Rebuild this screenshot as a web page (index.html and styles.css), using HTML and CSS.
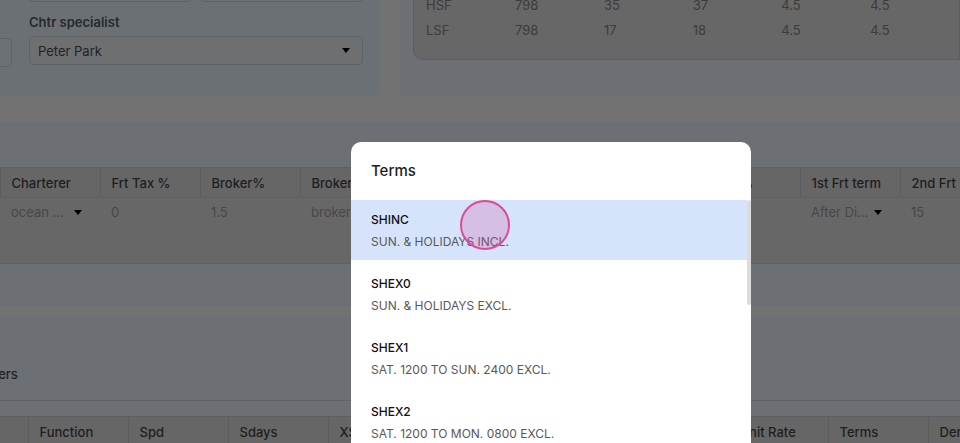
FILE: index.html
```html
<!DOCTYPE html>
<html>
<head>
  <title>Voyage Estimate - Terms</title>
  <link rel="stylesheet" href="styles.css">
</head>
<body>
  <div class="page">
    <div class="top">
      <div class="left-panel">
        <div class="stub"></div>
        <div class="fields">
          <div class="field-row">
            <div class="input"></div>
            <div class="input"></div>
          </div>
          <div class="field-label">Chtr specialist</div>
          <div class="select">
            <span>Peter Park</span>
            <span class="caret"></span>
          </div>
        </div>
      </div>
      <div class="right-panel">
        <div class="fuel-card">
          <table class="fuel-table">
            <tr><td>HSF</td><td>798</td><td>35</td><td>37</td><td>4.5</td><td>4.5</td></tr>
            <tr><td>LSF</td><td>798</td><td>17</td><td>18</td><td>4.5</td><td>4.5</td></tr>
          </table>
        </div>
      </div>
    </div>

    <div class="section freight">
      <div class="grid-wrap">
        <table class="grid grid-freight">
          <thead>
            <tr>
              <th>Cargo</th><th>Charterer</th><th>Frt Tax %</th><th>Broker%</th><th>Broker</th>
              <th>Frt Type</th><th>Frt Rate</th><th>Frt Unit</th><th>Add %</th><th>1st Frt term</th><th>2nd Frt %</th>
            </tr>
          </thead>
          <tbody>
            <tr>
              <td>Coal</td>
              <td><div class="cell-select"><span>ocean ...</span><span class="caret"></span></div></td>
              <td>0</td><td>1.5</td><td>broker</td><td>Lumpsum</td><td>12.5</td><td>PMT</td><td>3.75</td>
              <td><div class="cell-select"><span>After Di...</span><span class="caret"></span></div></td>
              <td>15</td>
            </tr>
          </tbody>
        </table>
      </div>
    </div>

    <div class="section itinerary">
      <div class="section-title">Bunkers</div>
      <div class="rule"></div>
      <table class="grid grid-shift">
        <thead>
          <tr>
            <th>Port</th><th>Function</th><th>Spd</th><th>Sdays</th><th>XSdays</th>
            <th>Load Rate</th><th>Cargo</th><th>Days</th><th>Unit Rate</th><th>Terms</th><th>Dem</th>
          </tr>
        </thead>
      </table>
    </div>
  </div>

  <div class="modal">
    <div class="modal-title">Terms</div>
    <div class="modal-body">
      <div class="term-list">
        <div class="term active">
          <div class="term-code">SHINC</div>
          <div class="term-desc">SUN. &amp; HOLIDAYS INCL.</div>
        </div>
        <div class="term">
          <div class="term-code">SHEX0</div>
          <div class="term-desc">SUN. &amp; HOLIDAYS EXCL.</div>
        </div>
        <div class="term">
          <div class="term-code">SHEX1</div>
          <div class="term-desc">SAT. 1200 TO SUN. 2400 EXCL.</div>
        </div>
        <div class="term">
          <div class="term-code">SHEX2</div>
          <div class="term-desc">SAT. 1200 TO MON. 0800 EXCL.</div>
        </div>
      </div>
      <div class="scroll-track">
        <div class="scroll-thumb"></div>
      </div>
    </div>
  </div>
  <div class="touch"></div>
</body>
</html>
```

FILE: styles.css
```css
/* everything behind the dialog uses the scrim-darkened colours */
html {
  background-color: #737272;
}
body {
  margin: 0;
  padding: 0;
  font-family: Inter, "Noto Sans", sans-serif;
  overflow: hidden;
  height: 443px;
  position: relative;
}

.page {
  width: 960px;
  height: 443px;
  overflow: hidden;
  background-color: #737272;
}

/* top area */
.top {
  display: flex;
  height: 96px;
}
.left-panel {
  width: 380px;
  flex-shrink: 0;
  display: flex;
  background-color: #6b7075;
  border-bottom-right-radius: 6px;
}
.stub {
  width: 40px;
  height: 29px;
  margin-left: -28px;
  margin-top: 38px;
  margin-right: 17px;
  box-sizing: border-box;
  border: 1px solid #5f6367;
  border-radius: 4px;
  background-color: #6e7174;
}
.fields {
  width: 334px;
}
.field-row {
  display: flex;
  gap: 10px;
  margin-top: -27px;
}
.input {
  width: 162px;
  height: 29px;
  box-sizing: border-box;
  border: 1px solid #5f6367;
  border-radius: 4px;
  background-color: #6e7174;
}
.field-label {
  margin-top: 12px;
  font-size: 13px;
  line-height: 16px;
  font-weight: 600;
  color: #27292b;
}
.select {
  margin-top: 6px;
  height: 29px;
  box-sizing: border-box;
  border: 1px solid #606366;
  border-radius: 4px;
  background-color: #6d6f71;
  display: flex;
  align-items: center;
  justify-content: space-between;
  padding: 0 12px 0 8px;
  font-size: 13px;
  color: #232323;
}
.caret {
  width: 0;
  height: 0;
  border-left: 4px solid transparent;
  border-right: 4px solid transparent;
  border-top: 5px solid #000;
}

.right-panel {
  flex: 1;
  margin-left: 20px;
  padding-left: 13px;
  background-color: #6c7074;
}
.fuel-card {
  height: 100px;
  margin-top: -40px;
  box-sizing: border-box;
  background-color: #676767;
  border: 1px solid #5e5e5e;
  border-bottom-left-radius: 10px;
  padding: 0 0 17px 12px;
  display: flex;
  flex-direction: column;
  justify-content: flex-end;
}
.fuel-table {
  border-collapse: collapse;
  font-size: 13px;
  color: #3c3c3c;
}
.fuel-table td {
  width: 91px;
  height: 25px;
  padding: 0;
}

/* sections */
.section {
  background-color: #6c7074;
}
.freight {
  margin-top: 26px;
  height: 184px;
  padding-top: 45px;
  box-sizing: border-box;
}
.grid-wrap {
  height: 96px;
  background-color: #676767;
  border-bottom: 1px solid #616161;
  margin-left: -100px;
  width: 1100px;
}
.grid {
  border-collapse: collapse;
  table-layout: fixed;
  width: 1100px;
  font-size: 13px;
}
.grid th {
  width: 100px;
  height: 30px;
  box-sizing: border-box;
  padding: 0 0 0 11px;
  text-align: left;
  font-weight: 500;
  color: #1e1e1e;
  background-color: #666666;
  border-top: 1px solid #5c5e60;
  border-right: 1px solid #5d5d5d;
  border-bottom: 1px solid #606060;
  white-space: nowrap;
  overflow: hidden;
}
.grid td {
  height: 28px;
  padding: 0 0 0 11px;
  color: #474747;
  white-space: nowrap;
  overflow: hidden;
}
.cell-select {
  display: flex;
  align-items: center;
  justify-content: space-between;
  padding-right: 18px;
}

.itinerary {
  margin-top: 10px;
  height: 140px;
  padding-top: 50px;
  box-sizing: border-box;
}
.section-title {
  margin-left: -33px;
  font-size: 13px;
  line-height: 16px;
  font-weight: 500;
  color: #202123;
}
.rule {
  margin-top: 18px;
  height: 1px;
  background-color: #5f6366;
}
.grid-shift {
  margin-top: 15px;
  margin-left: -72px;
}

/* dialog */
.modal {
  position: absolute;
  left: 351px;
  top: 142px;
  width: 400px;
  height: 301px;
  background-color: #fff;
  border-radius: 10px 10px 0 0;
  overflow: hidden;
}
.modal-title {
  padding: 19px 20px 19px;
  font-size: 15px;
  line-height: 20px;
  font-weight: 500;
  color: #1e1e1e;
}
.modal-body {
  display: flex;
}
.term-list {
  flex: 1;
}
.term {
  height: 60px;
  box-sizing: border-box;
  margin-bottom: 4px;
  padding: 12px 20px 10px;
}
.term.active {
  background-color: #d6e4fb;
}
.term-code {
  font-size: 12px;
  line-height: 16px;
  font-weight: 500;
  color: #111;
}
.term-desc {
  margin-top: 6px;
  font-size: 12px;
  line-height: 16px;
  color: #585858;
}
.scroll-track {
  width: 4px;
}
.scroll-thumb {
  height: 105px;
  background-color: #dcdcdc;
  border-radius: 2px;
}

.touch {
  position: absolute;
  left: 460px;
  top: 200px;
  width: 50px;
  height: 50px;
  box-sizing: border-box;
  border-radius: 50%;
  border: 2px solid #dc4b93;
  background-color: rgba(210, 80, 160, 0.25);
}
```
